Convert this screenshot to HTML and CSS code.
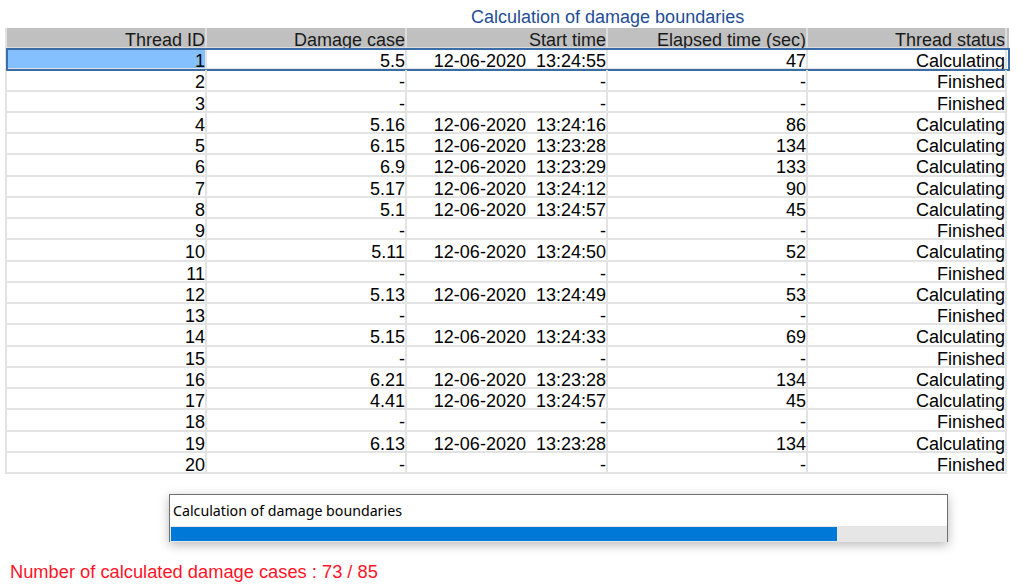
FILE: index.html
```html
<!DOCTYPE html>
<html>
<head>
<meta charset="utf-8">
<link rel="stylesheet" href="styles.css">
</head>
<body>
<div class="page">
  <div class="title">Calculation of damage boundaries</div>
  <div class="grid">
    <div class="row head">
      <div class="cell">Thread ID</div><div class="cell">Damage case</div><div class="cell">Start time</div><div class="cell">Elapsed time (sec)</div><div class="cell">Thread status</div>
    </div>
    <div class="row selected">
      <div class="cell sel">1</div><div class="cell">5.5</div><div class="cell">12-06-2020&nbsp; 13:24:55</div><div class="cell">47</div><div class="cell">Calculating</div>
    </div>
    <div class="row"><div class="cell">2</div><div class="cell">-</div><div class="cell">-</div><div class="cell">-</div><div class="cell">Finished</div></div>
    <div class="row"><div class="cell">3</div><div class="cell">-</div><div class="cell">-</div><div class="cell">-</div><div class="cell">Finished</div></div>
    <div class="row"><div class="cell">4</div><div class="cell">5.16</div><div class="cell">12-06-2020&nbsp; 13:24:16</div><div class="cell">86</div><div class="cell">Calculating</div></div>
    <div class="row"><div class="cell">5</div><div class="cell">6.15</div><div class="cell">12-06-2020&nbsp; 13:23:28</div><div class="cell">134</div><div class="cell">Calculating</div></div>
    <div class="row"><div class="cell">6</div><div class="cell">6.9</div><div class="cell">12-06-2020&nbsp; 13:23:29</div><div class="cell">133</div><div class="cell">Calculating</div></div>
    <div class="row"><div class="cell">7</div><div class="cell">5.17</div><div class="cell">12-06-2020&nbsp; 13:24:12</div><div class="cell">90</div><div class="cell">Calculating</div></div>
    <div class="row"><div class="cell">8</div><div class="cell">5.1</div><div class="cell">12-06-2020&nbsp; 13:24:57</div><div class="cell">45</div><div class="cell">Calculating</div></div>
    <div class="row"><div class="cell">9</div><div class="cell">-</div><div class="cell">-</div><div class="cell">-</div><div class="cell">Finished</div></div>
    <div class="row"><div class="cell">10</div><div class="cell">5.11</div><div class="cell">12-06-2020&nbsp; 13:24:50</div><div class="cell">52</div><div class="cell">Calculating</div></div>
    <div class="row"><div class="cell">11</div><div class="cell">-</div><div class="cell">-</div><div class="cell">-</div><div class="cell">Finished</div></div>
    <div class="row"><div class="cell">12</div><div class="cell">5.13</div><div class="cell">12-06-2020&nbsp; 13:24:49</div><div class="cell">53</div><div class="cell">Calculating</div></div>
    <div class="row"><div class="cell">13</div><div class="cell">-</div><div class="cell">-</div><div class="cell">-</div><div class="cell">Finished</div></div>
    <div class="row"><div class="cell">14</div><div class="cell">5.15</div><div class="cell">12-06-2020&nbsp; 13:24:33</div><div class="cell">69</div><div class="cell">Calculating</div></div>
    <div class="row"><div class="cell">15</div><div class="cell">-</div><div class="cell">-</div><div class="cell">-</div><div class="cell">Finished</div></div>
    <div class="row"><div class="cell">16</div><div class="cell">6.21</div><div class="cell">12-06-2020&nbsp; 13:23:28</div><div class="cell">134</div><div class="cell">Calculating</div></div>
    <div class="row"><div class="cell">17</div><div class="cell">4.41</div><div class="cell">12-06-2020&nbsp; 13:24:57</div><div class="cell">45</div><div class="cell">Calculating</div></div>
    <div class="row"><div class="cell">18</div><div class="cell">-</div><div class="cell">-</div><div class="cell">-</div><div class="cell">Finished</div></div>
    <div class="row"><div class="cell">19</div><div class="cell">6.13</div><div class="cell">12-06-2020&nbsp; 13:23:28</div><div class="cell">134</div><div class="cell">Calculating</div></div>
    <div class="row"><div class="cell">20</div><div class="cell">-</div><div class="cell">-</div><div class="cell">-</div><div class="cell">Finished</div></div>
  </div>
  <div class="progress-panel">
    <div class="progress-label">Calculation of damage boundaries</div>
    <div class="progress-track"><div class="progress-fill" style="width: 85.88%"></div></div>
  </div>
  <div class="count">Number of calculated damage cases : 73 / 85</div>
</div>
</body>
</html>
```
FILE: styles.css
```css
html, body {
  margin: 0;
  padding: 0;
  background: #ffffff;
}
.page {
  width: 1023px;
  height: 586px;
  overflow: hidden;
  font-family: "Liberation Sans", Arial, sans-serif;
  font-size: 18px;
  color: #000;
}
.title {
  height: 21px;
  padding-top: 7px;
  padding-left: 471px;
  line-height: 21px;
  color: #1f4d96;
  white-space: nowrap;
}
.grid {
  margin-left: 5px;
  width: 1002px;
  display: flex;
  flex-direction: column;
  border-left: 2px solid #e3e3e3;
}
.row {
  display: grid;
  grid-template-columns: 200px 200px 201px 200px 199px;
  grid-template-rows: minmax(0, 1fr);
  height: 21.25px;
  box-sizing: border-box;
}
.row.head {
  height: 21px;
  background: #c0c0c0;
  color: #1a1a1a;
}
.cell {
  box-sizing: border-box;
  min-height: 0;
  border-right: 2px solid #e3e3e3;
  border-bottom: 2px solid #e3e3e3;
  text-align: right;
  line-height: 25px;
  white-space: nowrap;
}
.row.head .cell {
  border-color: #dcdcdc;
  line-height: 24px;
}
.row.selected {
  outline: 2px solid #3a6ca6;
  outline-offset: -1px;
}
.cell.sel {
  background: #84c0fd;
}
.progress-panel {
  margin-top: 20px;
  margin-left: 169px;
  width: 779px;
  box-sizing: border-box;
  border: 1px solid #6f6f6f;
  border-bottom: none;
  background: #fff;
  box-shadow: 0 3px 10px rgba(0, 0, 0, 0.28);
}
.progress-label {
  height: 31px;
  line-height: 31px;
  padding-left: 3px;
  font-family: "Noto Sans", "Open Sans", sans-serif;
  font-size: 14.2px;
  color: #000;
}
.progress-track {
  height: 16px;
  box-sizing: border-box;
  padding: 1px;
  background: #e6e6e6;
}
.progress-fill {
  height: 100%;
  background: #0078d7;
}
.count {
  margin-top: 19px;
  padding-left: 10px;
  line-height: 21px;
  font-size: 18.3px;
  color: #ff1428;
  white-space: nowrap;
}
```
